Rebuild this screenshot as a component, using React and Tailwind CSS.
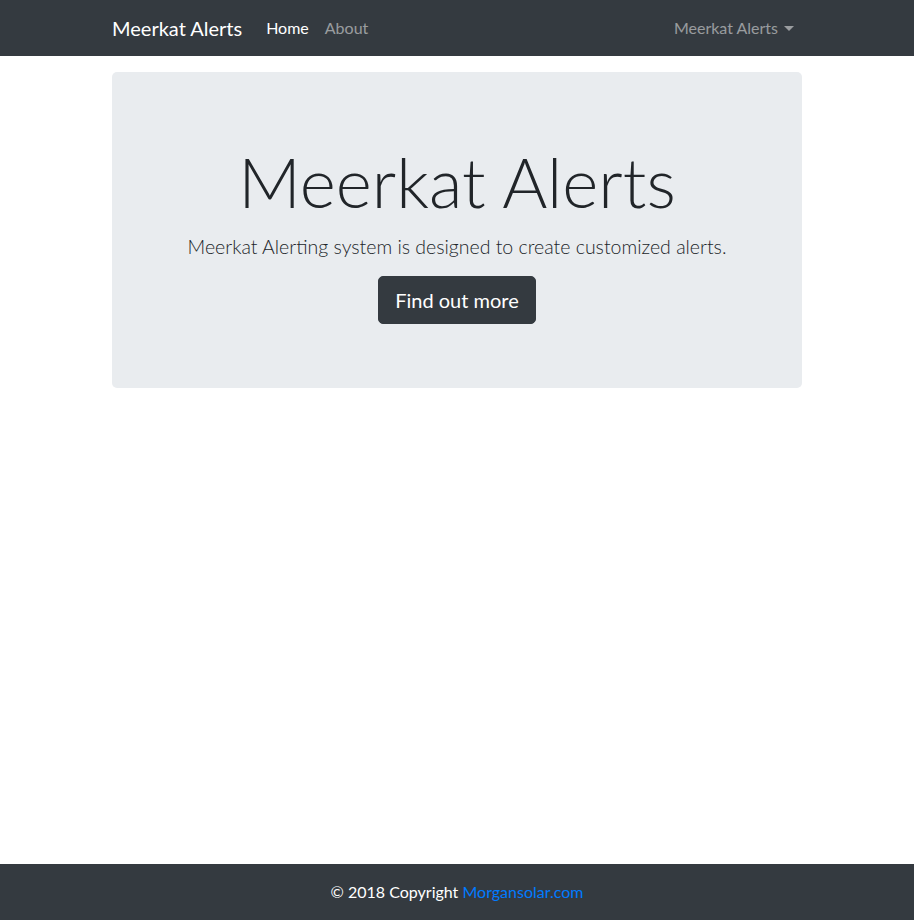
export default function App() {
    return (
        <div className="min-h-screen flex flex-col bg-white text-[#212529] font-['Lato',sans-serif]">
            <nav className="bg-[#343a40] h-14">
                <div className="w-[720px] mx-auto px-[15px] h-full flex items-center">
                    <span className="text-[20px] text-white mr-4">Meerkat Alerts</span>
                    <div className="flex text-[16px]">
                        <a className="px-2 text-white">Home</a>
                        <a className="px-2 text-white/50">About</a>
                    </div>
                    <a className="ml-auto px-2 text-[16px] text-white/50 flex items-center gap-[6px]">
                        Meerkat Alerts
                        <span className="inline-block w-0 h-0 border-x-[5px] border-x-transparent border-t-[5px] border-t-white/50" />
                    </a>
                </div>
            </nav>

            <main className="flex-1">
                <div className="w-[720px] mx-auto px-[15px] mt-4">
                    <div className="bg-[#e9ecef] rounded-[5px] px-8 py-16 flex flex-col items-center">
                        <h1 className="text-[69px] font-light leading-[86.4px] pt-[3px] mb-[5px]">Meerkat Alerts</h1>
                        <p className="text-[19.5px] font-light leading-[30px] pt-[2px] mb-[14px]">
                            Meerkat Alerting system is designed to create customized alerts.
                        </p>
                        <button className="bg-[#343a40] text-white text-[20px] leading-[1.5] px-4 py-2 rounded-[5px] border border-[#343a40]">
                            Find out more
                        </button>
                    </div>
                </div>
            </main>

            <footer className="bg-[#343a40] h-14 flex items-center justify-center text-[16px] text-white">
                <p>
                    © 2018 Copyright <a className="text-[#007bff]">Morgansolar.com</a>
                </p>
            </footer>
        </div>
    );
}
